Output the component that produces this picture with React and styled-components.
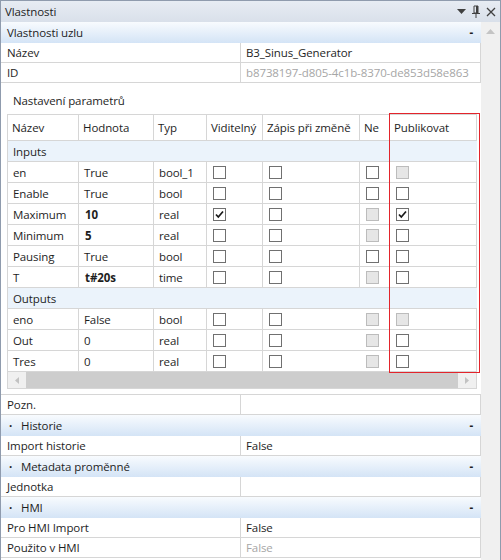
import React from 'react';
import styled, { createGlobalStyle, css } from 'styled-components';

const GlobalStyle = createGlobalStyle`
	body {
		margin: 0;
		background: #ffffff;
	}
	* {
		box-sizing: border-box;
	}
`;

const GRID = '#d6d6d6';

const params = [
	{ group: 'Inputs' },
	{ name: 'en', value: 'True', type: 'bool_1', v: 'off', z: 'off', ne: 'off', p: 'dis' },
	{ name: 'Enable', value: 'True', type: 'bool', v: 'off', z: 'off', ne: 'off', p: 'off' },
	{ name: 'Maximum', value: '10', bold: true, type: 'real', v: 'on', z: 'off', ne: 'dis', p: 'on' },
	{ name: 'Minimum', value: '5', bold: true, type: 'real', v: 'off', z: 'off', ne: 'dis', p: 'off' },
	{ name: 'Pausing', value: 'True', type: 'bool', v: 'off', z: 'off', ne: 'off', p: 'off' },
	{ name: 'T', value: 't#20s', bold: true, type: 'time', v: 'off', z: 'off', ne: 'dis', p: 'off' },
	{ group: 'Outputs' },
	{ name: 'eno', value: 'False', type: 'bool', v: 'off', z: 'off', ne: 'dis', p: 'dis' },
	{ name: 'Out', value: '0', type: 'real', v: 'off', z: 'off', ne: 'dis', p: 'off' },
	{ name: 'Tres', value: '0', type: 'real', v: 'off', z: 'off', ne: 'dis', p: 'off' },
];

const headers = ['Název', 'Hodnota', 'Typ', 'Viditelný', 'Zápis při změně', 'Ne', 'Publikovat'];

const Check = ({ state }) => (
	<CheckBox disabled={state === 'dis'}>
		{state === 'on' && (
			<svg width="11" height="11" viewBox="0 0 11 11">
				<path d="M2 5.5 L4.3 8 L9 2.5" fill="none" stroke="#1a1a1a" strokeWidth="1.7" />
			</svg>
		)}
	</CheckBox>
);

const Band = ({ children, dot }) => (
	<SectionBand>
		<BandLabel>
			{dot && <Dot>·</Dot>}
			{children}
		</BandLabel>
		<Collapse>-</Collapse>
	</SectionBand>
);

const Prop = ({ label, value, muted }) => (
	<PropRow>
		<PropName>{label}</PropName>
		<PropValue muted={muted}>{value}</PropValue>
	</PropRow>
);

const App = () => {
	return (
		<>
			<GlobalStyle />
			<Frame>
				<TitleBar>
					<span>Vlastnosti</span>
					<TitleIcons>
						<svg width="9" height="5" viewBox="0 0 9 5">
							<polygon points="0,0 9,0 4.5,5" fill="#404040" />
						</svg>
						<svg width="8" height="13" viewBox="0 0 8 13">
							<path d="M2 1 H6 V8 H2 Z" fill="none" stroke="#404040" strokeWidth="1" />
							<path d="M5 1 V8" stroke="#404040" strokeWidth="2" />
							<path d="M0 8.5 H8" stroke="#404040" strokeWidth="1" />
							<path d="M4 9 V13" stroke="#404040" strokeWidth="1" />
						</svg>
						<svg width="10" height="10" viewBox="0 0 10 10">
							<path d="M1 1 L9 9 M9 1 L1 9" stroke="#404040" strokeWidth="1.3" />
						</svg>
					</TitleIcons>
				</TitleBar>
				<Body>
					<Content>
						<Band>Vlastnosti uzlu</Band>
						<Prop label="Název" value="B3_Sinus_Generator" />
						<Prop label="ID" value="b8738197-d805-4c1b-8370-de853d58e863" muted />
						<ParamBlock>
							<ParamLabel>Nastavení parametrů</ParamLabel>
							<GridWrap>
								<ParamGrid>
									{headers.map(h => (
										<HeadCell key={h}>{h}</HeadCell>
									))}
									{params.map((row, i) =>
										row.group ? (
											<GroupRow key={i}>{row.group}</GroupRow>
										) : (
											<React.Fragment key={i}>
												<Cell>{row.name}</Cell>
												<Cell bold={row.bold}>{row.value}</Cell>
												<Cell>{row.type}</Cell>
												<Cell><Check state={row.v} /></Cell>
												<Cell><Check state={row.z} /></Cell>
												<Cell><Check state={row.ne} /></Cell>
												<Cell><Check state={row.p} /></Cell>
											</React.Fragment>
										)
									)}
								</ParamGrid>
								<HScroll>
									<ArrowBox>
										<svg width="4" height="7" viewBox="0 0 4 7">
											<polygon points="4,0 4,7 0,3.5" fill="#c2c2c2" />
										</svg>
									</ArrowBox>
									<Thumb />
									<ArrowBox>
										<svg width="4" height="7" viewBox="0 0 4 7">
											<polygon points="0,0 0,7 4,3.5" fill="#c2c2c2" />
										</svg>
									</ArrowBox>
								</HScroll>
								<Highlight />
							</GridWrap>
						</ParamBlock>
						<Prop label="Pozn." value="" />
						<Band dot>Historie</Band>
						<Prop label="Import historie" value="False" />
						<Band dot>Metadata proměnné</Band>
						<Prop label="Jednotka" value="" />
						<Band dot>HMI</Band>
						<Prop label="Pro HMI Import" value="False" />
						<Prop label="Použito v HMI" value="False" muted />
					</Content>
					<VScroll>
						<svg width="9" height="5" viewBox="0 0 9 5">
							<polygon points="0,5 9,5 4.5,0" fill="#c4c4c4" />
						</svg>
					</VScroll>
				</Body>
			</Frame>
		</>
	);
};

const Frame = styled.div`
	width: 501px;
	height: 560px;
	overflow: hidden;
	display: flex;
	flex-direction: column;
	border: 1px solid #8f9bad;
	border-bottom: none;
	font-family: "Open Sans", "Noto Sans", sans-serif;
	font-size: 11.5px;
	letter-spacing: -0.1px;
	color: #1e1e1e;
`;

const TitleBar = styled.div`
	flex: none;
	height: 21px;
	display: flex;
	align-items: center;
	justify-content: space-between;
	padding: 0 4px 0 4px;
	background: linear-gradient(#e7ecf3, #d9e0ea);
`;

const TitleIcons = styled.div`
	display: flex;
	align-items: center;
	gap: 6px;
`;

const Body = styled.div`
	flex: 1;
	min-height: 0;
	display: flex;
`;

const Content = styled.div`
	width: 480px;
	flex: none;
	display: flex;
	flex-direction: column;
`;

const VScroll = styled.div`
	flex: 1;
	background: #f0f0f0;
	display: flex;
	justify-content: center;
	padding-top: 7px;
`;

const SectionBand = styled.div`
	flex: none;
	height: 21px;
	display: flex;
	align-items: center;
	justify-content: space-between;
	padding: 0 8px 0 6px;
	background: linear-gradient(#f8fbfe, #d4e4f6);
`;

const BandLabel = styled.span`
	display: flex;
	align-items: center;
`;

const Dot = styled.span`
	width: 14px;
	padding-left: 2px;
	font-weight: bold;
`;

const Collapse = styled.span`
	font-weight: bold;
`;

const PropRow = styled.div`
	flex: none;
	height: 20px;
	display: grid;
	grid-template-columns: 240px 1fr;
	border-bottom: 1px solid ${GRID};
	border-right: 1px solid ${GRID};
`;

const PropName = styled.div`
	display: flex;
	align-items: center;
	padding-left: 6px;
	border-right: 1px solid ${GRID};
`;

const PropValue = styled.div`
	display: flex;
	align-items: center;
	padding-left: 5px;
	white-space: nowrap;
	overflow: hidden;
	color: ${props => (props.muted ? '#a6a6a6' : '#1e1e1e')};
`;

const ParamBlock = styled.div`
	flex: none;
	padding: 10px 4px 5px 6px;
	border-bottom: 1px solid ${GRID};
`;

const ParamLabel = styled.div`
	height: 16px;
	line-height: 16px;
	padding-left: 6px;
	margin-bottom: 5px;
`;

const GridWrap = styled.div`
	position: relative;
	width: 470px;
	border: 1px solid ${GRID};
`;

const ParamGrid = styled.div`
	display: grid;
	grid-template-columns: 71px 75px 53px 56px 97px 30px 87px;
	grid-auto-rows: 21px;
	grid-template-rows: 26px;
`;

const cellBase = css`
	display: flex;
	align-items: center;
	padding: 0 5px;
	border-bottom: 1px solid ${GRID};
	white-space: nowrap;
	overflow: hidden;
`;

const HeadCell = styled.div`
	${cellBase};
	padding-left: 4px;
	border-right: 1px solid ${GRID};
	&:nth-child(7) {
		border-right: none;
	}
`;

const Cell = styled.div`
	${cellBase};
	padding-left: ${props => (props.bold ? '6px' : '5px')};
	border-right: 1px solid ${GRID};
	font-weight: ${props => (props.bold ? 700 : 400)};
	&:nth-child(7n) {
		border-right: none;
	}
`;

const GroupRow = styled.div`
	${cellBase};
	grid-column: 1 / -1;
	background: #ebf3fb;
`;

const CheckBox = styled.span`
	width: 13px;
	height: 13px;
	margin-left: 1px;
	display: flex;
	align-items: center;
	justify-content: center;
	border: 1px solid #707070;
	background: #ffffff;

	${props => props.disabled && css`
		border-color: #bcbcbc;
		background: #e6e6e6;
	`}
`;

const HScroll = styled.div`
	height: 16px;
	display: flex;
	background: #f0f0f0;
`;

const ArrowBox = styled.div`
	width: 18px;
	display: flex;
	align-items: center;
	justify-content: center;
`;

const Thumb = styled.div`
	flex: 1;
	background: #cdcdcd;
`;

const Highlight = styled.div`
	position: absolute;
	left: 381px;
	top: -2px;
	width: 91px;
	height: 260px;
	border: 1px solid #e3242b;
	pointer-events: none;
`;

export default App;
